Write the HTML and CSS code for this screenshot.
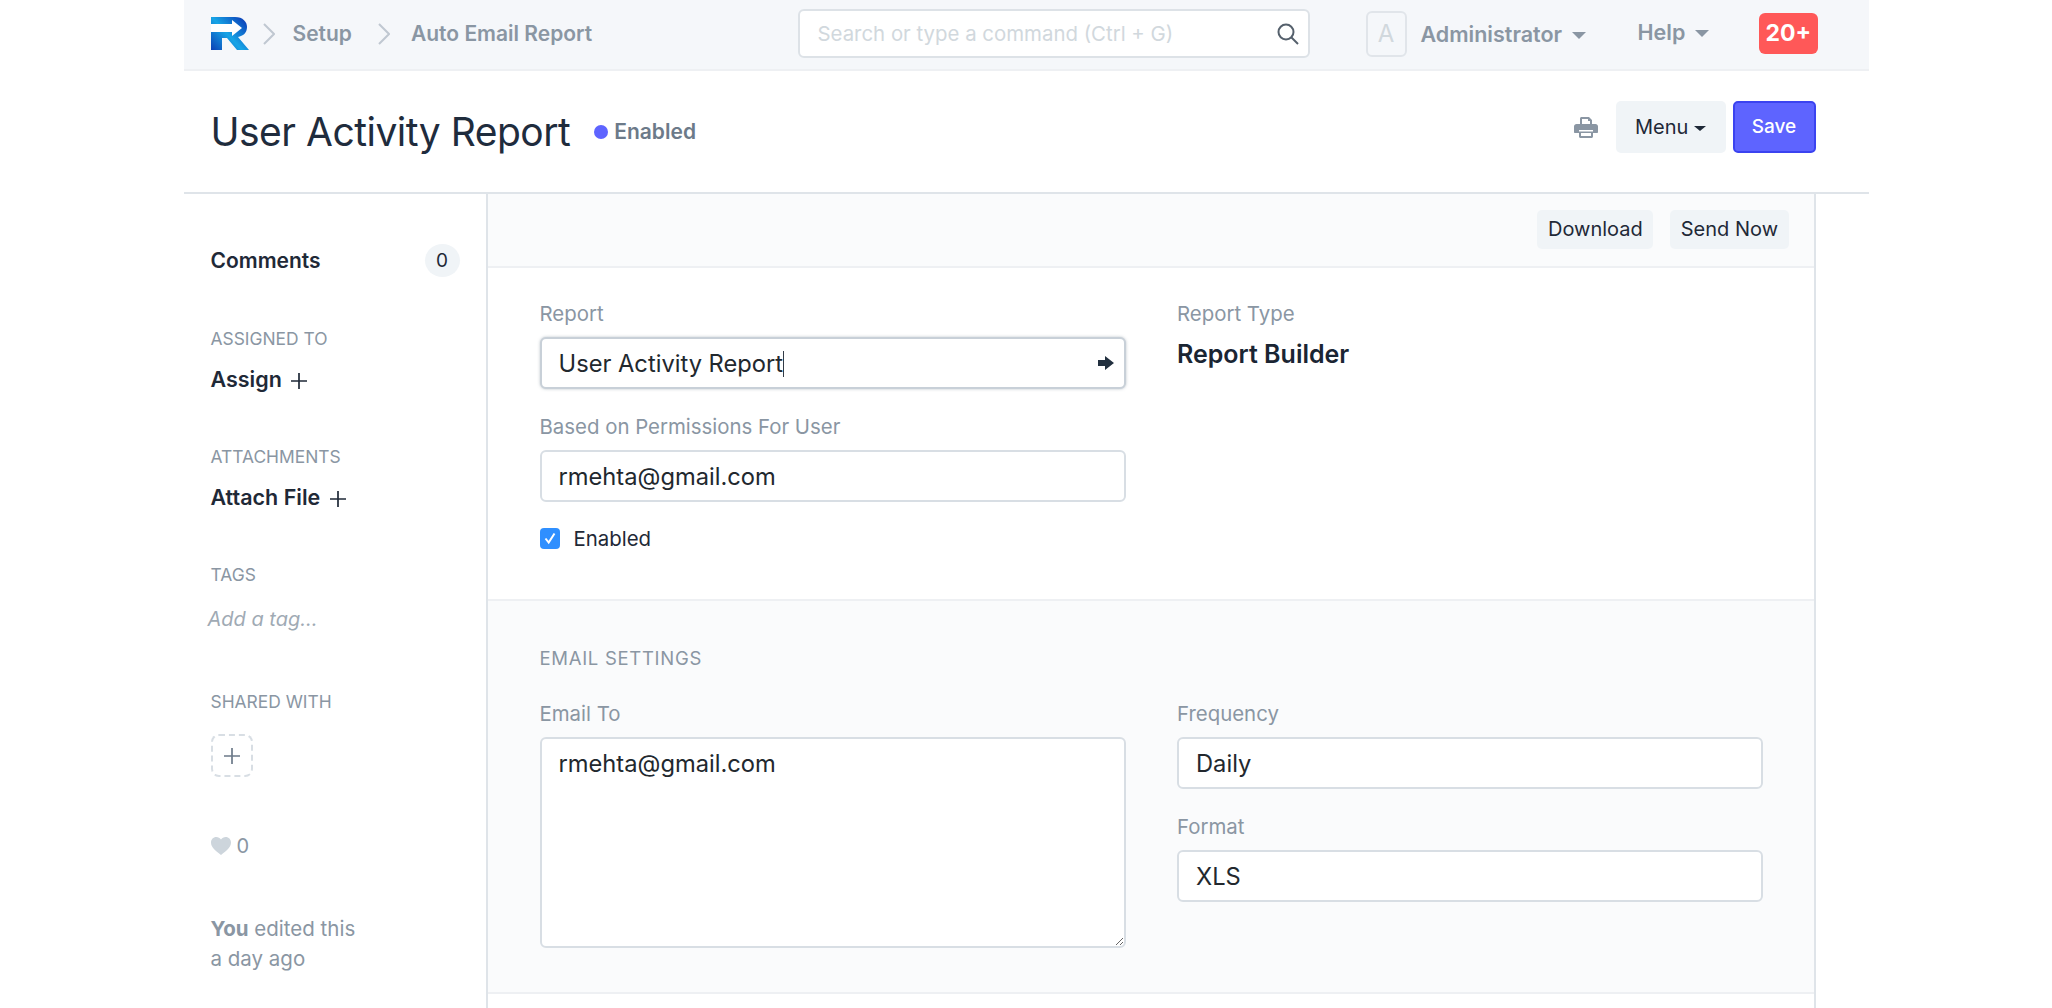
FILE: index.html
```html
<!DOCTYPE html>
<html lang="en">
<head>
    <meta charset="UTF-8">
    <meta name="viewport" content="width=device-width, initial-scale=1.0">
    <title>User Activity Report</title>
    <link rel="stylesheet" href="styles.css">
</head>
<body>
    <div class="page">
        <nav class="navbar">
            <div class="crumbs">
                <svg class="logo" viewBox="0 0 38 33" aria-label="Logo">
                    <defs>
                        <linearGradient id="logo-blue" x1="0" y1="1" x2="1" y2="0.2">
                            <stop offset="0" stop-color="#0c3fb4"/>
                            <stop offset="0.5" stop-color="#17a5e6"/>
                            <stop offset="1" stop-color="#0b3fb8"/>
                        </linearGradient>
                    </defs>
                    <path fill="url(#logo-blue)" d="M0 0H24C32 0 36 5 36 10C36 16 32 19 27 20L38 33H26L16 21H11V33H0Z"/>
                    <path fill="#fff" d="M0 7H21V3L31 11L21 19V15H0Z"/>
                </svg>
                <svg class="chevron chevron-first" viewBox="0 0 12 22"><path d="M1 1L11 11L1 21"/></svg>
                <a class="crumb">Setup</a>
                <svg class="chevron" viewBox="0 0 12 22"><path d="M1 1L11 11L1 21"/></svg>
                <a class="crumb">Auto Email Report</a>
            </div>
            <div class="search">
                <span>Search or type a command (Ctrl + G)</span>
                <svg class="search-icon" viewBox="0 0 24 24"><circle cx="10" cy="10" r="7.5"/><path d="M15.5 15.5L22 22"/></svg>
            </div>
            <div class="avatar">A</div>
            <a class="nav-link nav-user">Administrator <i class="caret"></i></a>
            <a class="nav-link nav-help">Help <i class="caret"></i></a>
            <div class="notif">20+</div>
        </nav>

        <header class="title-bar">
            <h1>User Activity Report</h1>
            <span class="indicator">Enabled</span>
            <div class="title-actions">
                <svg class="print-icon" viewBox="0 0 24 22">
                    <path d="M6 8V2.5C6 1.700 6.700 1 7.500 1H15L18 4V8H16V5H14V3H8V8Z"/>
                    <path d="M2.500 8H21.500C22.900 8 24 9.100 24 10.500V16C24 16.600 23.600 17 23 17H19V14H5V17H1C.4 17 0 16.600 0 16V10.500C0 9.100 1.100 8 2.500 8Z"/>
                    <path d="M5 15.500H19V20.500C19 21.300 18.300 22 17.500 22H6.500C5.700 22 5 21.300 5 20.500ZM7 17V20H17V17Z"/>
                </svg>
                <button class="btn btn-menu">Menu <i class="caret caret-small"></i></button>
                <button class="btn btn-save">Save</button>
            </div>
        </header>

        <div class="content">
            <aside class="sidebar">
                <div class="comments-row">
                    <b>Comments</b>
                    <span class="count">0</span>
                </div>
                <h6 class="side-label label-assigned">Assigned To</h6>
                <a class="side-link">Assign <svg class="plus" viewBox="0 0 16 16"><path d="M8 0V16M0 8H16"/></svg></a>
                <h6 class="side-label">Attachments</h6>
                <a class="side-link">Attach File <svg class="plus" viewBox="0 0 16 16"><path d="M8 0V16M0 8H16"/></svg></a>
                <h6 class="side-label">Tags</h6>
                <p class="add-tag">Add a tag...</p>
                <h6 class="side-label label-shared">Shared With</h6>
                <div class="share-box"><svg class="plus plus-muted" viewBox="0 0 16 16"><path d="M8 0V16M0 8H16"/></svg></div>
                <div class="likes">
                    <svg class="heart" viewBox="0 0 20 18"><path d="M10 18C4 13.500 0 10 0 5.500C0 2.400 2.300 0 5.300 0C7.200 0 9 1 10 2.600C11 1 12.800 0 14.700 0C17.700 0 20 2.400 20 5.500C20 10 16 13.500 10 18Z"/></svg>
                    <span>0</span>
                </div>
                <p class="edited"><b>You</b> edited this<br>a day ago</p>
            </aside>

            <main class="form">
                <div class="form-toolbar">
                    <button class="btn btn-small">Download</button>
                    <button class="btn btn-small">Send Now</button>
                </div>

                <section class="form-section">
                    <div class="col">
                        <label class="field-label">Report</label>
                        <div class="input input-focus">
                            <span>User Activity Report</span><i class="text-cursor"></i>
                            <svg class="link-arrow" viewBox="0 0 16 14"><path d="M0 4H7V0L16 7L7 14V10H0Z"/></svg>
                        </div>
                        <label class="field-label">Based on Permissions For User</label>
                        <div class="input">rmehta@gmail.com</div>
                        <div class="check-row">
                            <span class="checkbox"><svg viewBox="0 0 20 20"><path d="M5.500 10.500L8.700 14.500L14.500 5.500"/></svg></span>
                            <span>Enabled</span>
                        </div>
                    </div>
                    <div class="col">
                        <label class="field-label">Report Type</label>
                        <div class="static-value">Report Builder</div>
                    </div>
                </section>

                <section class="form-section section-grey">
                    <h6 class="section-head">Email Settings</h6>
                    <div class="col">
                        <label class="field-label">Email To</label>
                        <textarea class="input textarea">rmehta@gmail.com</textarea>
                    </div>
                    <div class="col">
                        <label class="field-label">Frequency</label>
                        <div class="input">Daily</div>
                        <label class="field-label">Format</label>
                        <div class="input">XLS</div>
                    </div>
                </section>

                <section class="form-section section-rest"></section>
            </main>
        </div>
    </div>
</body>
</html>
```

FILE: styles.css
```css
* {
    margin: 0;
    padding: 0;
    box-sizing: border-box;
}
html, body {
    height: 1008px;
    overflow: hidden;
}
body {
    background: #ffffff;
    color: #1f2937;
    font-family: 'Inter', 'Liberation Sans', sans-serif;
    font-size: 20px;
}
.page {
    width: 1685px;
    margin: 0 auto;
}

/* navbar */
.navbar {
    display: flex;
    align-items: center;
    height: 71px;
    padding: 0 0 2px 27px;
    background: #f5f7fa;
    border-bottom: 2px solid #eef0f3;
}
.crumbs {
    display: flex;
    align-items: center;
    width: 587px;
    flex-shrink: 0;
}
.logo {
    width: 38px;
    height: 33px;
}
.chevron {
    width: 12px;
    height: 22px;
    margin: 0 21px 0 26px;
    fill: none;
    stroke: #c0c8d1;
    stroke-width: 2;
}
.chevron-first {
    margin: 0 18px 0 14px;
}
.crumb {
    color: #8a96a3;
    font-size: 21px;
    font-weight: 600;
}
.search {
    display: flex;
    align-items: center;
    justify-content: space-between;
    width: 512px;
    height: 49px;
    padding: 0 8px 0 18px;
    background: #ffffff;
    border: 2px solid #dde2e7;
    border-radius: 6px;
    color: #d1d8dd;
    font-size: 20.4px;
}
.search-icon {
    width: 24px;
    height: 24px;
    fill: none;
    stroke: #55606c;
    stroke-width: 2;
}
.avatar {
    display: flex;
    align-items: center;
    justify-content: center;
    width: 41px;
    height: 46px;
    margin-left: 56px;
    border: 2px solid #e1e5ea;
    border-radius: 6px;
    color: #d1d8dd;
    font-size: 24px;
}
.nav-link {
    color: #8a96a3;
    font-size: 21.5px;
    font-weight: 600;
    white-space: nowrap;
}
.nav-user {
    margin-left: 14px;
}
.nav-help {
    margin-left: 52px;
    margin-top: -3px;
}
.caret {
    display: inline-block;
    width: 0;
    height: 0;
    margin-left: 4px;
    vertical-align: 3px;
    border-top: 7px solid currentColor;
    border-left: 7px solid transparent;
    border-right: 7px solid transparent;
}
.caret-small {
    margin-left: 0;
    border-top-width: 5px;
    border-left-width: 6px;
    border-right-width: 6px;
}
.notif {
    width: 59px;
    height: 41px;
    margin-left: 50px;
    flex-shrink: 0;
    background: #ff5858;
    border-radius: 6px;
    color: #ffffff;
    font-size: 23px;
    font-weight: 700;
    line-height: 41px;
    text-align: center;
}

/* page title */
.title-bar {
    display: flex;
    align-items: center;
    height: 123px;
    padding-left: 27px;
    border-bottom: 2px solid #dfe4e9;
}
h1 {
    color: #1f2c3d;
    font-size: 39px;
    font-weight: 400;
    letter-spacing: -0.5px;
}
.indicator {
    display: flex;
    align-items: center;
    margin-left: 24px;
    color: #6c7a89;
    font-size: 21px;
    font-weight: 600;
}
.indicator::before {
    content: '';
    width: 14px;
    height: 14px;
    margin-right: 6px;
    background: #5e64ff;
    border-radius: 50%;
}
.title-actions {
    display: flex;
    align-items: center;
    margin-left: auto;
    padding: 0 53px 10px 0;
}
.print-icon {
    width: 24px;
    height: 22px;
    margin-right: 18px;
    fill: #8a96a3;
    fill-rule: evenodd;
}
.btn {
    border-radius: 5px;
    font-family: inherit;
    font-size: 20px;
    border: none;
    background: #f0f4f7;
    color: #1f2937;
}
.btn-menu {
    width: 110px;
    height: 52px;
}
.btn-save {
    width: 83px;
    height: 52px;
    margin-left: 7px;
    background: #5e64ff;
    border: 2px solid #3b43f0;
    color: #ffffff;
    font-size: 19px;
    font-weight: 500;
}

/* body of the form */
.content {
    display: flex;
    height: 814px;
}
.sidebar {
    width: 304px;
    padding: 52px 27px 0;
    border-right: 2px solid #dfe4e9;
    flex-shrink: 0;
    color: #1f2937;
}
.comments-row {
    display: flex;
    align-items: center;
    justify-content: space-between;
    height: 34px;
    margin-right: -1px;
    margin-top: -3px;
    font-size: 21px;
}
.comments-row b {
    font-weight: 600;
}
.count {
    width: 35px;
    height: 33px;
    background: #f0f4f7;
    border-radius: 50%;
    font-size: 19px;
    line-height: 33px;
    text-align: center;
}
.side-label {
    margin-top: 56px;
    color: #8a96a3;
    font-size: 17.4px;
    font-weight: 400;
    line-height: 20px;
    text-transform: uppercase;
}
.label-assigned {
    margin-top: 52px;
}
.side-link {
    display: block;
    margin-top: 18px;
    font-size: 21.5px;
    font-weight: 600;
    line-height: 24px;
}
.plus {
    width: 16px;
    height: 16px;
    margin-left: 4px;
    vertical-align: -2px;
    fill: none;
    stroke: #1f2937;
    stroke-width: 1.7;
}
.add-tag {
    margin: 22px 0 0 -3px;
    color: #a0aab4;
    font-size: 20px;
    font-style: italic;
    line-height: 24px;
}
.label-shared {
    margin-top: 61px;
}
.share-box {
    display: flex;
    align-items: center;
    justify-content: center;
    width: 42px;
    height: 43px;
    margin-top: 22px;
    border: 2px dashed #d8dee4;
    border-radius: 8px;
}
.plus-muted {
    margin: 0;
    stroke: #6c7a89;
}
.likes {
    display: flex;
    align-items: center;
    gap: 6px;
    margin-top: 57px;
    color: #8a96a3;
}
.heart {
    width: 20px;
    height: 18px;
    fill: #cdd5dc;
}
.edited {
    margin-top: 56px;
    color: #8a96a3;
    font-size: 20.500px;
    line-height: 30px;
}
.edited b {
    font-weight: 700;
}

.form {
    width: 1328px;
    border-right: 2px solid #dfe4e9;
}
.form-toolbar {
    display: flex;
    justify-content: flex-end;
    gap: 17px;
    height: 74px;
    padding: 16px 25px 0 0;
    background: #fafbfc;
    border-bottom: 2px solid #eef0f3;
}
.btn-small {
    height: 39px;
    padding: 0 10.5px 2px;
}
.form-section {
    display: flex;
    flex-wrap: wrap;
    gap: 0 51.5px;
    height: 333px;
    padding: 34px 49.5px 0 52px;
    border-bottom: 2px solid #eef0f3;
}
.section-grey {
    align-content: flex-start;
    height: 393px;
    padding-top: 47px;
    background: #fafbfc;
}
.section-rest {
    height: 20px;
    padding: 0;
    border-bottom: none;
}
.col {
    width: 586px;
}
.section-head {
    width: 100%;
    margin-bottom: 34px;
    color: #8a96a3;
    font-size: 18.5px;
    font-weight: 400;
    line-height: 20px;
    letter-spacing: 0.7px;
    text-transform: uppercase;
}
.field-label {
    display: block;
    margin-bottom: 11px;
    color: #8a96a3;
    font-size: 20.400px;
    line-height: 24px;
}
.input {
    display: flex;
    align-items: center;
    height: 52px;
    margin-bottom: 26px;
    padding: 1px 18px 0 17px;
    background: #ffffff;
    border: 2px solid #d8dee4;
    border-radius: 6px;
    color: #22282e;
    font-family: inherit;
    font-size: 23.700px;
}
.input-focus {
    position: relative;
    border-color: #c8d0d8;
    box-shadow: 0 0 3px rgba(120, 135, 150, 0.5);
}
.text-cursor {
    width: 1px;
    height: 26px;
    background: #333c46;
}
.link-arrow {
    position: absolute;
    right: 10px;
    top: 17px;
    width: 16px;
    height: 14px;
    fill: #22303f;
}
.textarea {
    display: block;
    width: 100%;
    height: 211px;
    padding: 11px 18px 11px 17px;
    line-height: 28px;
}
.check-row {
    display: flex;
    align-items: center;
    gap: 14px;
    margin-top: -2px;
    font-size: 20.400px;
}
.checkbox {
    width: 20px;
    height: 21px;
    background: #2f8fff;
    border-radius: 4px;
}
.checkbox svg {
    display: block;
    fill: none;
    stroke: #ffffff;
    stroke-width: 2;
}
.static-value {
    padding-top: 3px;
    color: #1a2533;
    font-size: 25px;
    font-weight: 600;
    line-height: 28px;
}
```
